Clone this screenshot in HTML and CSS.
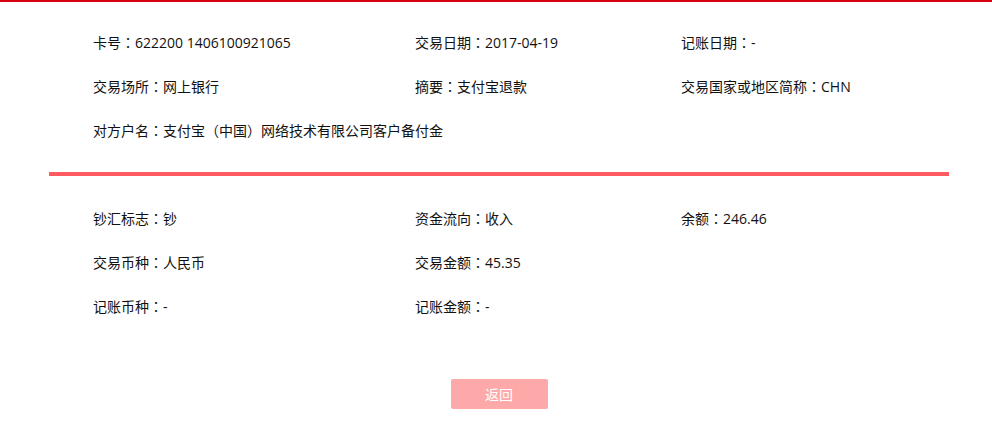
FILE: index.html
```html
<!DOCTYPE html>
<html lang="zh-CN">
<head>
<meta charset="utf-8">
<link rel="stylesheet" href="styles.css">
</head>
<body>
<div class="page">
  <div class="section top">
    <div class="cell">卡号<span class="colon" lang="zh-TW">：</span>622200 1406100921065</div>
    <div class="cell">交易日期<span class="colon" lang="zh-TW">：</span>2017-04-19</div>
    <div class="cell">记账日期<span class="colon" lang="zh-TW">：</span>-</div>
    <div class="cell">交易场所<span class="colon" lang="zh-TW">：</span>网上银行</div>
    <div class="cell">摘要<span class="colon" lang="zh-TW">：</span>支付宝退款</div>
    <div class="cell">交易国家或地区简称<span class="colon" lang="zh-TW">：</span>CHN</div>
    <div class="cell wide">对方户名<span class="colon" lang="zh-TW">：</span>支付宝（中国）网络技术有限公司客户备付金</div>
  </div>
  <div class="divider"></div>
  <div class="section bottom">
    <div class="cell">钞汇标志<span class="colon" lang="zh-TW">：</span>钞</div>
    <div class="cell">资金流向<span class="colon" lang="zh-TW">：</span>收入</div>
    <div class="cell">余额<span class="colon" lang="zh-TW">：</span>246.46</div>
    <div class="cell">交易币种<span class="colon" lang="zh-TW">：</span>人民币</div>
    <div class="cell">交易金额<span class="colon" lang="zh-TW">：</span>45.35</div>
    <div class="cell"></div>
    <div class="cell">记账币种<span class="colon" lang="zh-TW">：</span>-</div>
    <div class="cell">记账金额<span class="colon" lang="zh-TW">：</span>-</div>
    <div class="cell"></div>
  </div>
  <div class="actions">
    <button class="btn-back" type="button">返回</button>
  </div>
</div>
</body>
</html>
```

FILE: styles.css
```css
html, body {
  margin: 0;
  padding: 0;
  background: #ffffff;
}
body {
  font-family: "Open Sans", "Noto Sans CJK SC", sans-serif;
  font-size: 14px;
  color: #111111;
  border-top: 2px solid #d7000f;
}
.page {
  width: 900px;
  margin-left: 49px;
}
.section {
  display: grid;
  grid-template-columns: 322px 266px 1fr;
  padding-left: 44px;
}
.section.top {
  padding-top: 18px;
  padding-bottom: 20px;
}
.section.bottom {
  padding-top: 20px;
}
.cell {
  height: 44px;
  line-height: 44px;
  white-space: nowrap;
}
.cell.wide {
  grid-column: 1 / 4;
}
.colon {
  font-family: "Noto Sans CJK TC", "Noto Sans CJK SC", sans-serif;
}
.divider {
  height: 4px;
  background: #ff5a5f;
}
.actions {
  display: flex;
  justify-content: center;
  padding-top: 51px;
}
.btn-back {
  width: 97px;
  height: 30px;
  border: none;
  border-radius: 2px;
  background: #fda9aa;
  color: #ffffff;
  font-family: "Open Sans", "Noto Sans CJK SC", sans-serif;
  font-size: 14px;
  padding: 0;
  cursor: pointer;
}
```
